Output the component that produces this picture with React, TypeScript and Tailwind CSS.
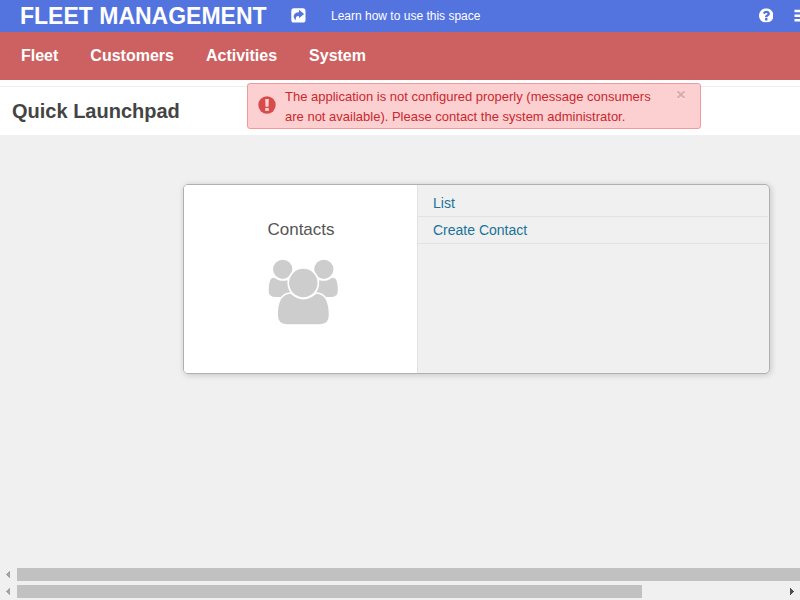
import React from "react";

function ShareIcon() {
  return (
    <svg width="15" height="15" viewBox="0 0 15 15" className="block -translate-y-px">
      <rect x="0.3" y="0.3" width="14.2" height="14.2" rx="2.6" fill="#fff" />
      <path d="M8 1.700 13.100 6 8 10.300V7.900C5.400 7.800 4.300 9 4.900 12.300 1.300 9.300 2 4.500 8 4.200Z" fill="#5373df" />
    </svg>
  );
}

function HelpIcon() {
  return (
    <svg width="14.500" height="14.500" viewBox="0 0 1536 1536" className="block -translate-y-[0.7px]">
      <path
        fill="#fff"
        d="M896 1248v-192q0-14-9-23t-23-9H672q-14 0-23 9t-9 23v192q0 14 9 23t23 9h192q14 0 23-9t9-23zm256-672q0-88-55.500-163T958 297t-170-41q-243 0-371 213-15 24 8 42l132 100q7 6 19 6 16 0 25-12 53-68 86-92 34-24 86-24 48 0 85.500 26t37.500 59q0 38-20 61t-68 45q-63 28-115.500 86.500T640 892v36q0 14 9 23t23 9h192q14 0 23-9t9-23q0-19 21.500-49.500T972 829q32-18 49-28.500t46-35 44.500-48 28-60.500 12.500-81zm384 192q0 209-103 385.500T1153.500 1433 768 1536t-385.500-103T103 1153.500 0 768t103-385.500T382.500 103 768 0t385.500 103T1433 382.500 1536 768z"
      />
    </svg>
  );
}

function MenuIcon() {
  return (
    <svg width="6" height="13" viewBox="0 0 6 13" className="-translate-y-px">
      <path d="M0.500 0.700H6V3.200H0.500ZM0.500 5.400H6V7.900H0.500ZM0.500 10.100H6V12.600H0.500Z" fill="#fff" />
    </svg>
  );
}

function PeopleIcon() {
  return (
    <svg width="70" height="66" viewBox="0 0 70 66" className="block" fill="#cdcdcd">
      <path d="M4.500 18.700Q0.700 19.500 0.700 32Q0.700 38 8 38H29V21.500H19.500L12 20Z" />
      <path d="M66 18.700Q69.800 19.500 69.800 32Q69.800 38 62.500 38H41.500V21.500H51L58 20Z" />
      <circle cx="14.700" cy="10.300" r="11.500" fill="#fff" />
      <circle cx="55.800" cy="10.300" r="11.500" fill="#fff" />
      <circle cx="14.700" cy="10.300" r="9.600" />
      <circle cx="55.800" cy="10.300" r="9.600" />
      <path
        d="M22.500 34.800C13.500 34.800 9.900 44 9.900 56Q9.900 65.200 19 65.200H52Q60.800 65.200 60.800 56C60.800 44 57.200 34.800 48.500 34.800Q35.300 46 22.500 34.800Z"
        stroke="#fff"
        strokeWidth="3"
        paintOrder="stroke"
      />
      <circle cx="35.300" cy="24" r="15.900" fill="#fff" />
      <circle cx="35.300" cy="24" r="14.200" />
    </svg>
  );
}

function Scrollbar({ full }: { full?: boolean }) {
  return (
    <div className="flex h-[17px] items-center">
      <div className="flex w-[17px] shrink-0 pl-[6px]">
        <svg width="4" height="7" viewBox="0 0 4 7" shapeRendering="crispEdges">
          <path d="M4 0V7L0 3.500Z" fill="#a3a3a3" />
        </svg>
      </div>
      <div className={full ? "h-[13px] grow bg-[#c1c1c1]" : "h-[13px] w-[625px] bg-[#c1c1c1]"} />
      {!full && (
        <svg width="4" height="7" viewBox="0 0 4 7" shapeRendering="crispEdges" className="ml-auto mr-[6px]">
          <path d="M0 0V7L4 3.500Z" fill="#505050" />
        </svg>
      )}
    </div>
  );
}

export default function App() {
  return (
    <div className="relative flex h-[600px] w-[800px] flex-col overflow-hidden bg-[#f0f0f0] font-['Liberation_Sans',Arial,sans-serif]">
      <header className="flex h-8 shrink-0 items-center bg-[#5373df] pl-5 text-white">
        <h1 className="w-[271px] whitespace-nowrap text-[23px] font-bold leading-8">FLEET MANAGEMENT</h1>
        <ShareIcon />
        <span className="ml-[25px] text-[12px] leading-8">Learn how to use this space</span>
        <div className="ml-auto flex items-center gap-[21px]">
          <HelpIcon />
          <MenuIcon />
        </div>
      </header>
      <nav className="flex h-12 shrink-0 items-center gap-8 bg-[#cd6162] pl-[21px] text-[16px] font-bold text-white">
        <a>Fleet</a>
        <a>Customers</a>
        <a>Activities</a>
        <a>System</a>
      </nav>
      <div className="h-[6px] shrink-0 bg-white" />
      <div className="flex h-[49px] shrink-0 items-center border-t border-[#efefef] bg-white pl-3">
        <h2 className="text-[20px] font-bold text-[#444]">Quick Launchpad</h2>
      </div>

      <div className="absolute left-[247px] top-[83px] flex h-[46px] w-[454px] rounded-[3px] border border-[#f09a9c] bg-[#fcd0d1]">
        <svg width="18" height="18" viewBox="0 0 18 18" className="ml-[10px] mt-3 shrink-0">
          <circle cx="9" cy="9" r="8.700" fill="#d84b4b" />
          <path d="M7.200 3H10.800L10.500 10.800H7.500Z" fill="#fcd0d1" />
          <rect x="7.200" y="12" width="3.600" height="2.900" fill="#fcd0d1" />
        </svg>
        <p className="ml-[9px] mt-[3px] whitespace-nowrap text-[13px] leading-5 text-[#c9282d]">
          The application is not configured properly (message consumers
          <br />
          are not available). Please contact the system administrator.
        </p>
        <svg width="10" height="10" viewBox="0 0 10 10" className="absolute left-[428px] top-[6px]">
          <path d="M1.500 2.500 8.500 9M8.500 2.500 1.500 9" stroke="#fff" strokeWidth="2" opacity="0.600" />
          <path d="M1.500 1.500 8.500 8M8.500 1.500 1.500 8" stroke="#dea9aa" strokeWidth="2.200" />
        </svg>
      </div>

      <main className="grow pl-[183px] pt-[49px]">
        <section className="flex h-[190px] w-[587px] overflow-hidden rounded-[5px] border border-[#b0b0b0] shadow-[1px_1px_6px_rgba(0,0,0,0.18)]">
          <div className="flex w-[234px] shrink-0 flex-col items-center border-r border-[#e2e2e2] bg-white">
            <h3 className="ml-px mt-[35px] text-[17px] leading-5 text-[#555]">Contacts</h3>
            <div className="ml-[4px] mt-[19px]">
              <PeopleIcon />
            </div>
          </div>
          <div className="grow text-[14px] text-[#19739a]">
            <a className="mr-px block h-8 border-b border-[#e2e2e2] pl-[15px] pt-1 leading-7">List</a>
            <a className="mr-px block h-[27px] border-b border-[#e2e2e2] pl-[15px] leading-[26px]">Create Contact</a>
          </div>
        </section>
      </main>
      <footer className="shrink-0">
        <Scrollbar full />
        <Scrollbar />
      </footer>
    </div>
  );
}
